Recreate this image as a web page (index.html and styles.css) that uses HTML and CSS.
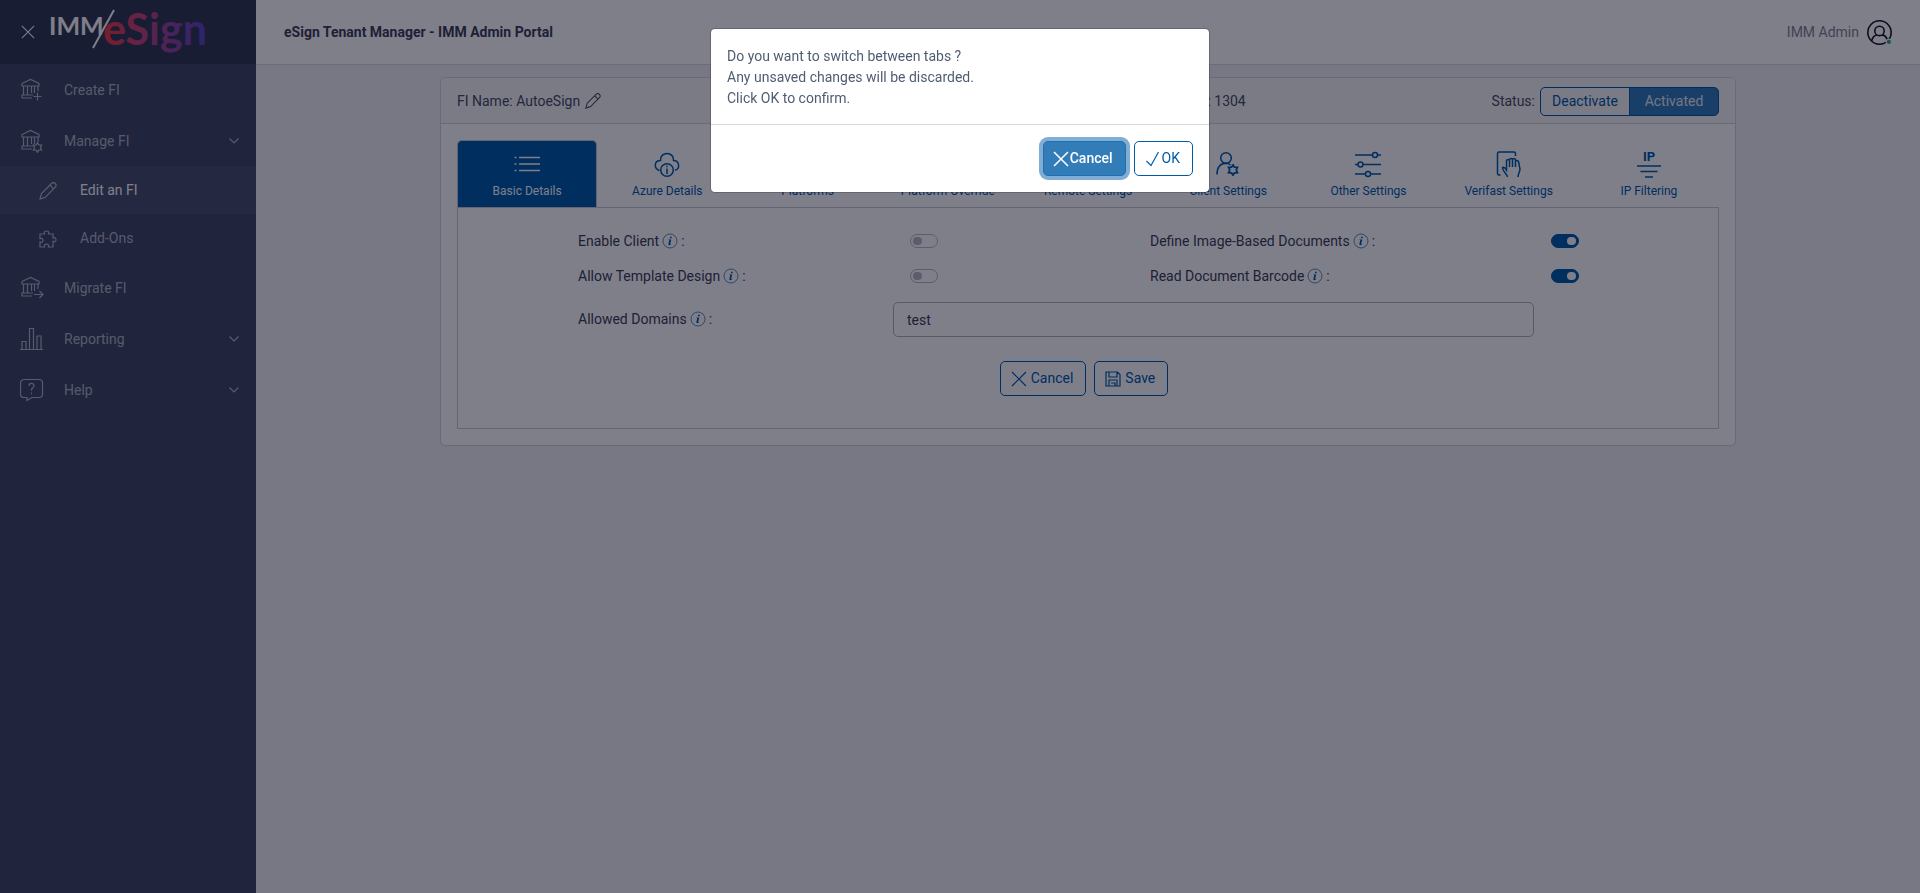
FILE: index.html
```
<!DOCTYPE html>
<html lang="en">
<head>
    <meta charset="UTF-8">
    <meta name="viewport" content="width=device-width, initial-scale=1.0">
    <title>eSign Tenant Manager - IMM Admin Portal</title>
    <link rel="stylesheet" href="styles.css">
</head>
<body>
<!-- shared icon shapes -->
<svg class="sprite" aria-hidden="true">
    <symbol id="bank" viewBox="0 0 24 24">
        <path d="M2 5.500 10.500 1.500 19 5.500V8H2zM3.500 8v9M7.500 8v9M11.500 8v7M14.500 8v7M18 8v5M13 17H2v3h10"/>
    </symbol>
    <symbol id="pencil" viewBox="0 0 18 18">
        <path d="M1 17 2.500 11.500 12.500 1.500a2.500 2.500 0 0 1 3.700 3.700L6.300 15.300zM11 3.200 14.500 6.800"/>
    </symbol>
    <symbol id="chevron" viewBox="0 0 10 6"><path d="M.5.5 5 5 9.500.5"/></symbol>
    <symbol id="cross" viewBox="0 0 16 16"><path d="M1 1 15 15M15 1 1 15"/></symbol>
    <symbol id="info" viewBox="0 0 16 16">
        <circle cx="8" cy="8" r="7"/>
        <path class="fill" d="M8.200 3.700h1.700l-.4 1.600H7.800zM6.400 6.400h2.900L8.100 11l1-.2-.2.700c-.9.700-2.900 1-2.500-.5l.9-3.900-.9-.2z"/>
    </symbol>
    <symbol id="gear" viewBox="0 0 10 10">
        <path d="M5 .7 6.200 2.600 8.700 2.800 7.700 5 8.700 7.200 6.200 7.400 5 9.300 3.800 7.400 1.300 7.200 2.300 5 1.300 2.800 3.800 2.600z"/>
    </symbol>
</svg>

<div class="app">
    <aside class="sidebar">
        <div class="brand">
            <button class="icon-button" aria-label="Close menu"><svg class="icon close"><use href="#cross"/></svg></button>
            <svg class="logo" viewBox="0 0 158 48" role="img" aria-label="IMM eSign">
                <defs>
                    <linearGradient id="logoFill" gradientUnits="userSpaceOnUse" x1="54" y1="0" x2="156" y2="0">
                        <stop offset="0" stop-color="#f03c46"/>
                        <stop offset=".35" stop-color="#c84678"/>
                        <stop offset=".7" stop-color="#8c46a5"/>
                        <stop offset="1" stop-color="#5a46c8"/>
                    </linearGradient>
                </defs>
                <text class="logo-imm" x="-1" y="27">IMM</text>
                <path d="M43 40 64 2"/>
                <text class="logo-esign" x="53" y="37">eSign</text>
            </svg>
        </div>
        <nav class="nav">
            <a class="nav-link" href="#">
                <svg class="icon nav-icon" viewBox="0 0 24 24"><use href="#bank"/><path d="M17.500 14.500v8M13.500 18.500h8"/></svg>
                <span>Create FI</span>
            </a>
            <a class="nav-link" href="#">
                <svg class="icon nav-icon" viewBox="0 0 24 24"><use href="#bank"/><use href="#gear" x="12" y="13" width="11" height="11"/></svg>
                <span>Manage FI</span>
                <svg class="icon chevron"><use href="#chevron"/></svg>
            </a>
            <a class="nav-link sub active" href="#">
                <svg class="icon sub-icon"><use href="#pencil"/></svg>
                <span>Edit an FI</span>
            </a>
            <a class="nav-link sub" href="#">
                <svg class="icon sub-icon" viewBox="0 0 18 18"><path d="M1 4h4.500C4.500 1.800 6 1 7.500 1s3 .8 2 3H14v4c2-.8 3 .2 3 1.700s-1 2.500-3 1.500V17H9.500c1-2-.5-2.800-2-2.800s-3 .8-2 2.800H1v-5c2 1 3-.3 3-1.700S3 8 1 8.700z"/></svg>
                <span>Add-Ons</span>
            </a>
            <a class="nav-link" href="#">
                <svg class="icon nav-icon" viewBox="0 0 24 24"><use href="#bank"/><path d="M14 18.500h9M19.500 15l3.500 3.500-3.500 3.500"/></svg>
                <span>Migrate FI</span>
            </a>
            <a class="nav-link" href="#">
                <svg class="icon nav-icon" viewBox="0 0 24 24"><path d="M0 22.500h23M2 22.500v-8h4v8M9.500 22.500V1.500h4v21M17 22.500V9h4v13.500"/></svg>
                <span>Reporting</span>
                <svg class="icon chevron"><use href="#chevron"/></svg>
            </a>
            <a class="nav-link" href="#">
                <svg class="icon nav-icon" viewBox="0 0 24 24"><path d="M4 1.500h15a3.500 3.500 0 0 1 3.500 3.500v11a3.500 3.500 0 0 1-3.500 3.500h-7L7 22.500v-3H4A3.500 3.500 0 0 1 .5 16V5A3.500 3.500 0 0 1 4 1.500zM9 8c0-3.500 5-3.300 5-.3 0 2-2.500 2.200-2.500 4.300v.8M11.500 14.500v1.700"/></svg>
                <span>Help</span>
                <svg class="icon chevron"><use href="#chevron"/></svg>
            </a>
        </nav>
    </aside>

    <div class="wrapper">
        <header class="header">
            <h1>eSign Tenant Manager - IMM Admin Portal</h1>
            <div class="user">
                <span>IMM Admin</span>
                <svg class="avatar" viewBox="0 0 24 24">
                    <circle cx="12" cy="12" r="11.200"/>
                    <circle cx="12" cy="10.500" r="4.500"/>
                    <path d="M4.500 20c.8-3.300 3-5.300 5-5.600M19.500 19c-.8-2.500-3-4.400-5-4.700"/>
                    <circle class="online" cx="21" cy="21" r="2.500"/>
                </svg>
            </div>
        </header>

        <main class="main">
            <section class="card">
                <div class="card-header">
                    <div class="fi-name">FI Name: AutoeSign
                        <button class="icon-button" aria-label="Edit FI name"><svg class="icon pencil"><use href="#pencil"/></svg></button>
                    </div>
                    <div class="fi-number">FI Number : 1304</div>
                    <div class="status">
                        <span>Status:</span>
                        <div class="button-group">
                            <button>Deactivate</button>
                            <button class="selected">Activated</button>
                        </div>
                    </div>
                </div>

                <div class="card-body">
                    <div class="tabs" role="tablist">
                        <button class="tab active" role="tab">
                            <svg class="icon tab-icon" viewBox="0 0 26 26"><path d="M5 6.500h21M5 13h21M5 19.500h21M.5 6.500h2M.5 13h2M.5 19.500h2"/></svg>
                            Basic Details
                        </button>
                        <button class="tab" role="tab">
                            <svg class="icon tab-icon" viewBox="0 0 26 26"><path d="M5.500 19.500C-.5 17.500 0 9.500 6.500 9.500 6 0 20 0 19.500 9.500c6 0 7 8.500 1.500 9.700"/><circle cx="13" cy="19" r="6.300"/><path d="M13 17.500V23M13 14.800v1.500"/></svg>
                            Azure Details
                        </button>
                        <button class="tab" role="tab">
                            <svg class="icon tab-icon" viewBox="0 0 26 26"><path d="M2 4h22v14H2zM9 23h8M13 18v5"/></svg>
                            Platforms
                        </button>
                        <button class="tab" role="tab">
                            <svg class="icon tab-icon" viewBox="0 0 26 26"><path d="M2 4h22v14H2zM9 23h8M13 18v5"/></svg>
                            Platform Override
                        </button>
                        <button class="tab" role="tab">
                            <svg class="icon tab-icon" viewBox="0 0 26 26"><path d="M2 4h22v14H2zM9 23h8M13 18v5"/></svg>
                            Remote Settings
                        </button>
                        <button class="tab" role="tab">
                            <svg class="icon tab-icon" viewBox="0 0 26 26"><circle cx="11" cy="7" r="5.300"/><path d="M2 23.500c0-7 3-11 9-11.200 2 0 3.500.7 4.500 1.700"/><use href="#gear" x="12" y="13" width="12" height="12"/></svg>
                            Client Settings
                        </button>
                        <button class="tab" role="tab">
                            <svg class="icon tab-icon" viewBox="0 0 26 26"><path d="M0 4h17.500M22.500 4H26M0 13.500h3M8 13.500h18M0 23h10.500M15.500 23H26"/><circle cx="20" cy="4" r="2.500"/><circle cx="5.500" cy="13.500" r="2.500"/><circle cx="13" cy="23" r="2.500"/></svg>
                            Other Settings
                        </button>
                        <button class="tab" role="tab">
                            <svg class="icon tab-icon" viewBox="0 0 26 26"><path d="M19.500 5V2.500c0-1-.5-1.500-1.500-1.500H3c-1 0-1.500.5-1.500 1.500v20c0 1 .5 1.500 1.500 1.500h1.500M11.500 26c0-3-5-5-5-9.500 2-1 3 1 4 2.500V9.500c.5-1.500 2.500-1.500 3 0V16 8.500c.5-1.500 2.500-1.500 3 0V16 8.500c.5-1.500 2.500-1.500 3 0V16v-5.500c.5-1.500 2.500-1.500 3 0L24 18c0 3-2 4.500-2 8"/></svg>
                            Verifast Settings
                        </button>
                        <button class="tab" role="tab">
                            <svg class="icon tab-icon" viewBox="0 0 26 26"><text class="ip" x="13" y="10">IP</text><path d="M1 15h24M4.500 20.500h17M9 26h8"/></svg>
                            IP Filtering
                        </button>
                    </div>

                    <form class="panel">
                        <div class="fields">
                            <div class="field-label"><label for="enableClient">Enable Client</label> <svg class="info"><use href="#info"/></svg> :</div>
                            <input class="switch" type="checkbox" id="enableClient">
                            <div class="field-label"><label for="imageDocs">Define Image-Based Documents</label> <svg class="info"><use href="#info"/></svg> :</div>
                            <input class="switch" type="checkbox" id="imageDocs" checked>

                            <div class="field-label"><label for="templateDesign">Allow Template Design</label> <svg class="info"><use href="#info"/></svg> :</div>
                            <input class="switch" type="checkbox" id="templateDesign">
                            <div class="field-label"><label for="barcode">Read Document Barcode</label> <svg class="info"><use href="#info"/></svg> :</div>
                            <input class="switch" type="checkbox" id="barcode" checked>
                        </div>
                        <div class="fields">
                            <div class="field-label"><label for="domains">Allowed Domains</label> <svg class="info"><use href="#info"/></svg> :</div>
                            <input class="text-input" type="text" id="domains" value="test">
                        </div>
                        <div class="form-buttons">
                            <button type="button" class="button"><svg class="icon button-icon"><use href="#cross"/></svg>Cancel</button>
                            <button type="button" class="button">
                                <svg class="icon button-icon" viewBox="0 0 16 16"><path d="M1 1h11.500L15 3.500V15H1zM4 1v5h8V1M4 15V9h8v6M6 12h4v3"/></svg>Save
                            </button>
                        </div>
                    </form>
                </div>
            </section>
        </main>
    </div>
</div>

<div class="backdrop">
    <div class="modal" role="dialog" aria-modal="true" aria-labelledby="confirmText">
        <div class="modal-body" id="confirmText">
            Do you want to switch between tabs ?<br>
            Any unsaved changes will be discarded.<br>
            Click OK to confirm.
        </div>
        <div class="modal-footer">
            <button class="button focused"><svg class="icon button-icon"><use href="#cross"/></svg>Cancel</button>
            <button class="button"><svg class="icon button-icon" viewBox="0 0 16 16"><path d="M1.500 10 6 14.500 13.500 1"/></svg>OK</button>
        </div>
    </div>
</div>
</body>
</html>
```

FILE: styles.css
```
* {
    box-sizing: border-box;
    margin: 0;
    padding: 0;
}

body {
    font-family: Roboto, "Liberation Sans", sans-serif;
    font-size: 14px;
    line-height: 21px;
    color: #3c4257;
    background-color: #f0f0f2;
}

button, input {
    font: inherit;
    color: inherit;
}

button {
    background: none;
    border: none;
    cursor: pointer;
}

a {
    text-decoration: none;
}

.sprite {
    position: absolute;
    width: 0;
    height: 0;
}

.icon {
    flex: none;
    fill: none;
    stroke: currentColor;
    stroke-width: 1.2;
}

.icon-button {
    display: inline-flex;
}

.app {
    display: flex;
    min-height: 100vh;
}

/* sidebar */

.sidebar {
    flex: none;
    width: 256px;
    background-color: #404865;
}

.brand {
    display: flex;
    align-items: center;
    height: 64px;
    padding-left: 21px;
    background-color: #333a50;
}

.close {
    width: 14px;
    height: 14px;
    color: #fff;
}

.logo {
    width: 158px;
    height: 48px;
    margin-left: 15px;
    overflow: visible;
}

.logo path {
    stroke: #fff;
    stroke-width: 2;
}

.logo-imm {
    font: 700 25px Lato, sans-serif;
    fill: #fff;
}

.logo-esign {
    font: 700 43px Lato, sans-serif;
    fill: url(#logoFill);
}

.nav-link {
    display: flex;
    align-items: center;
    height: 51px;
    padding: 1px 17px 0 20px;
    color: rgba(255, 255, 255, 0.6);
}

.nav-link.sub {
    height: 48px;
    padding-left: 39px;
}

.nav-link.active {
    color: #fff;
    background-color: rgba(255, 255, 255, 0.05);
}

.nav-icon {
    width: 24px;
    height: 24px;
    margin-right: 20px;
}

.sub-icon {
    width: 18px;
    height: 18px;
    margin-right: 23px;
    color: rgba(255, 255, 255, 0.6);
}

.chevron {
    width: 10px;
    height: 6px;
    margin-left: auto;
}

/* header */

.wrapper {
    flex: 1;
    min-width: 0;
}

.header {
    display: flex;
    justify-content: space-between;
    align-items: center;
    height: 65px;
    padding: 0 28px;
    background-color: #fff;
    border-bottom: 1px solid #d8dbe0;
}

.header h1 {
    font-size: 14px;
    font-weight: 700;
}

.user {
    display: flex;
    align-items: center;
    gap: 8px;
    color: #85858f;
}

.avatar {
    width: 25px;
    height: 25px;
    fill: none;
    stroke: #14141e;
    stroke-width: 1.5;
    overflow: visible;
}

.avatar .online {
    fill: #2eb85c;
    stroke: #fff;
    stroke-width: 1;
}

/* card */

.main {
    padding: 12px 184px;
}

.card {
    background-color: #fff;
    border: 1px solid #d5d5d9;
    border-radius: 5px;
}

.card-header {
    display: grid;
    grid-template-columns: 12fr 13fr 15fr;
    align-items: center;
    height: 46px;
    padding: 1px 16px 0;
    color: #4a4f60;
    background-color: #f7f7f7;
    border-bottom: 1px solid #d5d5d9;
    border-radius: 5px 5px 0 0;
}

.fi-name {
    display: flex;
    align-items: center;
    gap: 5px;
}

.pencil {
    width: 16px;
    height: 16px;
}

.fi-number {
    text-align: right;
}

.status {
    display: flex;
    align-items: center;
    justify-content: flex-end;
    gap: 5px;
}

.button-group {
    display: flex;
}

.button-group button {
    height: 29px;
    width: 90px;
    color: #005ca9;
    border: 1px solid #005ca9;
    border-radius: 5px 0 0 5px;
}

.button-group .selected {
    margin-left: -1px;
    color: #e6eef5;
    background-color: #327db8;
    border-radius: 0 5px 5px 0;
}

.card-body {
    padding: 16px;
}

/* tabs */

.tabs {
    display: grid;
    grid-template-columns: repeat(9, 1fr);
}

.tab {
    display: flex;
    flex-direction: column;
    align-items: center;
    height: 67px;
    padding-top: 10px;
    font-size: 12px;
    line-height: 18px;
    gap: 5px;
    color: #005ca9;
    border: 1px solid transparent;
    border-bottom: none;
    border-radius: 5px 5px 0 0;
}

.tab.active {
    color: #fff;
    background-color: #005ca9;
    border-color: #c4c9d0;
}

.tab-icon {
    width: 26px;
    height: 26px;
    stroke-width: 1.5;
    overflow: visible;
}

.ip {
    font-size: 13px;
    font-weight: 700;
    text-anchor: middle;
    fill: currentColor;
    stroke: none;
}

/* basic details form */

.panel {
    padding: 16px 120px 32px;
    border: 1px solid #c9c9d0;
}

.fields {
    display: grid;
    grid-template-columns: 315fr 257fr 384fr 64fr;
    grid-auto-rows: 35px;
    align-items: center;
}

.fields + .fields {
    margin-top: 8px;
}

.field-label {
    display: flex;
    align-items: center;
    gap: 3px;
}

.info {
    width: 16px;
    height: 16px;
    margin-bottom: 2px;
    fill: none;
    stroke: #5a8fb5;
}

.info .fill, .fill {
    fill: #005ca9;
    stroke: none;
}

.switch {
    appearance: none;
    width: 28px;
    height: 14px;
    margin: 0 0 1px 17px;
    padding: 2px;
    border: 1px solid #b9b9c4;
    border-radius: 7px;
    cursor: pointer;
}

.switch::before {
    content: "";
    display: block;
    width: 9px;
    height: 8px;
    border-radius: 4px;
    background-color: #b9b9c4;
}

.switch:checked {
    border-color: #005ca9;
    background-color: #005ca9;
}

.switch:checked::before {
    margin-left: 13px;
    background-color: #fff;
}

.text-input {
    grid-column: 2 / 4;
    width: 100%;
    height: 35px;
    padding: 0 13px;
    background-color: #fff;
    border: 1px solid #b1b1be;
    border-radius: 5px;
}

.form-buttons {
    display: flex;
    justify-content: center;
    gap: 8px;
    margin-top: 24px;
    padding-right: 8px;
}

.button {
    display: flex;
    align-items: center;
    gap: 4px;
    height: 35px;
    padding: 0 12px 0 10px;
    color: #005ca9;
    border: 1px solid #005ca9;
    border-radius: 5px;
}

.button-icon {
    width: 16px;
    height: 16px;
}

/* confirm dialog */

.backdrop {
    position: fixed;
    inset: 0;
    padding-top: 28px;
    background-color: rgba(0, 0, 21, 0.5);
}

.modal {
    max-width: 500px;
    margin: 0 auto;
    color: #4f5d73;
    background-color: #fff;
    background-clip: padding-box;
    border: 1px solid rgba(0, 0, 21, 0.2);
    border-radius: 5px;
}

.modal-body {
    padding: 17px 16px 15px;
}

.modal-footer {
    display: flex;
    justify-content: flex-end;
    gap: 8px;
    padding: 16px;
    border-top: 1px solid #d8dbe0;
}

.modal-footer .button {
    gap: 1px;
}

.modal-footer .focused {
    padding-left: 9px;
    gap: 1px;
    color: #fff;
    font-weight: 500;
    background-color: #327db8;
    border-color: #1f6fb2;
    box-shadow: 0 0 0 4px #80add4;
}

.modal-footer .focused .icon {
    stroke-width: 1.5;
}
```
